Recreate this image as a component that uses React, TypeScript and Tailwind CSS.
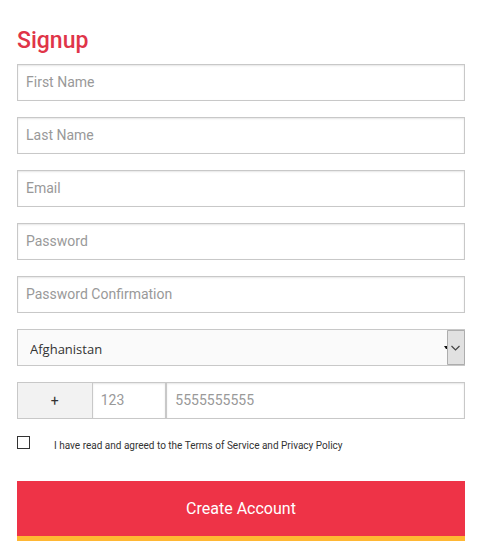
import * as React from 'react'
import { clsx } from 'clsx'

const fields = [
  { id: 'first-name', label: 'First Name', type: 'text' },
  { id: 'last-name', label: 'Last Name', type: 'text' },
  { id: 'email', label: 'Email', type: 'email' },
  { id: 'password', label: 'Password', type: 'password' },
  { id: 'password-confirmation', label: 'Password Confirmation', type: 'password' },
]

function Input({ className, ...props }: React.ComponentProps<'input'>) {
  return (
    <input
      className={clsx(
        'h-[37px] w-full min-w-0 border border-[#c8c8c8] bg-white px-2 pb-0.5 text-sm text-[#404040] shadow-[inset_0_1px_2px_rgba(0,0,0,0.1)] outline-none placeholder:text-[#999999]',
        className
      )}
      {...props}
    />
  )
}

function CountrySelect() {
  return (
    <div className="relative">
      <select
        aria-label="Country"
        defaultValue="AF"
        className="block h-[37px] w-full appearance-none border border-[#c8c8c8] bg-[#fafafa] pt-1 pr-6 pl-3 font-['Open_Sans','Noto_Sans',sans-serif] text-[13px] text-[#333333] outline-none">
        <option value="AF">Afghanistan</option>
        <option value="AL">Albania</option>
        <option value="DZ">Algeria</option>
      </select>
      <svg
        className="pointer-events-none absolute top-0 right-0"
        width="21"
        height="37"
        viewBox="0 0 21 37"
        fill="none"
        aria-hidden="true">
        <path d="M0 17h3v3h-1z" fill="#111111" />
        <path d="M3.5 1.5h17v34h-17z" fill="#e1e1e1" stroke="#adadad" />
        <path d="M7.5 17l4 4 4-4" stroke="#444444" strokeWidth="1.2" />
      </svg>
    </div>
  )
}

export default function App() {
  return (
    <form
      className="pt-[25px] pr-[15px] pb-3 pl-[17px] font-['Roboto',sans-serif]"
      onSubmit={(e) => e.preventDefault()}>
      <h1 className="mb-[7px] text-[23px] leading-8 font-medium text-[#e03448]">Signup</h1>
      <div className="flex flex-col gap-4">
        {fields.map(({ id, label, type }) => (
          <Input key={id} id={id} name={id} type={type} placeholder={label} aria-label={label} />
        ))}
        <CountrySelect />
        <div className="grid grid-cols-6">
          <span className="flex items-center justify-center border border-r-0 border-[#c8c8c8] bg-[#f2f2f2] text-sm text-[#333333]">
            +
          </span>
          <Input type="tel" placeholder="123" aria-label="Country code" />
          <Input
            className="col-span-4"
            type="tel"
            placeholder="5555555555"
            aria-label="Phone number"
          />
        </div>
      </div>
      <div className="mt-4 flex items-start">
        <input
          id="terms"
          type="checkbox"
          className="mt-px size-[13px] appearance-none border border-[#333333] bg-white checked:bg-[#333333]"
        />
        <label htmlFor="terms" className="ml-6 pt-[3px] text-[10px] leading-4 text-[#333333]">
          I have read and agreed to the Terms of Service and Privacy Policy
        </label>
      </div>
      <button
        type="submit"
        className="mt-[27px] h-[60px] w-full border-b-[5px] border-[#ffb733] bg-[#ee3347] text-base text-white">
        Create Account
      </button>
    </form>
  )
}
